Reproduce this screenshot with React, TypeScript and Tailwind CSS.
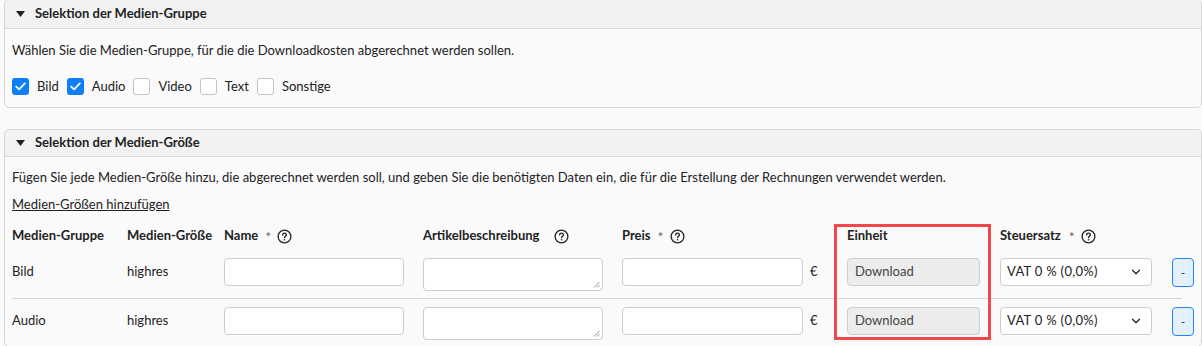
import React from "react";
import { ChevronDown } from "lucide-react";

const font = { fontFamily: "Lato, 'Noto Sans', sans-serif" };

function Help() {
  return (
    <svg width="15" height="15" viewBox="0 0 16 16" className="shrink-0 block">
      <circle cx="8" cy="8" r="6.8" fill="none" stroke="#222" strokeWidth="1.4" />
      <path d="M6 6.3a2 2 0 0 1 4 0c0 1.3-2 1.5-2 2.9" fill="none" stroke="#222" strokeWidth="1.4" strokeLinecap="round" />
      <circle cx="8" cy="11.4" r="0.85" fill="#222" />
    </svg>
  );
}

function Caret() {
  return (
    <svg width="9" height="6" viewBox="0 0 9 6" className="shrink-0">
      <path d="M0 0h9L4.5 6z" fill="#222" />
    </svg>
  );
}

function Check({ checked, label }: { checked: boolean; label: string }) {
  return (
    <div className="flex items-center gap-[8px]">
      {checked ? (
        <span className="flex h-[17px] w-[17px] items-center justify-center rounded-[3px] bg-[#0d7ff9]">
          <svg width="11" height="9" viewBox="0 0 11 9">
            <path d="M1.2 4.6l2.9 2.8L9.8 1.4" fill="none" stroke="#fff" strokeWidth="1.8" strokeLinecap="round" strokeLinejoin="round" />
          </svg>
        </span>
      ) : (
        <span className="h-[17px] w-[17px] rounded-[3px] border border-[#c4c4c4] bg-white" />
      )}
      <span>{label}</span>
    </div>
  );
}

function Row({ group, last }: { group: string; last?: boolean }) {
  return (
    <div className={`flex items-start pt-[8px] ${last ? "pb-[6px]" : "pb-[7px] border-b border-[#d4d4d4]"}`}>
      <div className="w-[115px] shrink-0 h-[28px] flex items-center">{group}</div>
      <div className="w-[97px] shrink-0 h-[28px] flex items-center">highres</div>
      <div className="w-[199px] shrink-0">
        <div className="w-[180px] h-[28px] rounded-[4px] border border-[#cdcdcd] bg-white" />
      </div>
      <div className="w-[199px] shrink-0">
        <div className="relative w-[180px] h-[33px] rounded-[4px] border border-[#cdcdcd] bg-white">
          <svg className="absolute right-[2px] bottom-[2px]" width="7" height="7" viewBox="0 0 7 7">
            <path d="M1 6.5L6.5 1M4 6.5L6.5 4" stroke="#777" strokeWidth="0.8" />
          </svg>
        </div>
      </div>
      <div className="w-[225px] shrink-0 flex items-center">
        <div className="w-[181px] h-[28px] rounded-[4px] border border-[#cdcdcd] bg-white" />
        <span className="ml-[7px]">€</span>
      </div>
      <div className="w-[153px] shrink-0">
        <div className="w-[133px] h-[28px] rounded-[4px] border border-[#cdcdcd] bg-[#ececec] flex items-center px-[7px] text-[#444]">
          Download
        </div>
      </div>
      <div className="w-[172px] shrink-0">
        <div className="w-[152px] h-[28px] rounded-[4px] border border-[#cdcdcd] bg-white flex items-center justify-between pl-[6px] pr-[8px]">
          <span className="tracking-[0.3px]">VAT 0 % (0,0%)</span>
          <ChevronDown size={14} strokeWidth={2.2} color="#222" />
        </div>
      </div>
      <div className="w-[22px] shrink-0 h-[29px] rounded-[4px] border border-[#1a85ff] bg-[#e5f0ff] flex items-center justify-center text-[#333] text-[12px]">
        -
      </div>
    </div>
  );
}

export default function App() {
  return (
    <div className="min-h-[346px] bg-[#fafafa] text-[13px] text-[#222] overflow-hidden" style={font}>
      <div className="ml-[4px] rounded-[5px] border border-[#d6d6d6] -mt-px">
        <div className="h-[29px] flex items-center gap-[10px] pl-[11px] bg-[#f2f2f2] border-b border-[#d6d6d6] rounded-t-[5px] font-bold">
          <Caret />
          <span>Selektion der Medien-Gruppe</span>
        </div>
        <div className="px-[7px] pt-[14px] pb-[12px]">
          <div className="h-[15px] leading-[15px]">Wählen Sie die Medien-Gruppe, für die die Downloadkosten abgerechnet werden sollen.</div>
          <div className="mt-[20px] flex items-center gap-[8px] h-[17px] leading-[17px]">
            <Check checked label="Bild" />
            <Check checked label="Audio" />
            <Check checked={false} label="Video" />
            <Check checked={false} label="Text" />
            <Check checked={false} label="Sonstige" />
          </div>
        </div>
      </div>

      <div className="ml-[4px] mt-[21px] rounded-[5px] border border-[#d6d6d6]">
        <div className="h-[27px] flex items-center gap-[10px] pl-[11px] bg-[#f2f2f2] border-b border-[#d6d6d6] rounded-t-[5px] font-bold">
          <Caret />
          <span>Selektion der Medien-Größe</span>
        </div>
        <div className="px-[7px] pt-[13px]">
          <div className="h-[15px] leading-[15px]">
            Fügen Sie jede Medien-Größe hinzu, die abgerechnet werden soll, und geben Sie die benötigten Daten ein, die für die Erstellung der Rechnungen verwendet werden.
          </div>
          <div className="mt-[12px] h-[15px] leading-[15px] underline">Medien-Größen hinzufügen</div>
          <div className="relative mt-[10px] mr-[12px]">
            <div className="flex items-center h-[28px] font-bold">
              <div className="w-[115px] shrink-0">Medien-Gruppe</div>
              <div className="w-[97px] shrink-0">Medien-Größe</div>
              <div className="w-[199px] shrink-0 flex items-center">
                <span>Name</span>
                <span className="ml-[7px] font-normal text-[#666] text-[14px]">*</span>
                <span className="ml-[6px]"><Help /></span>
              </div>
              <div className="w-[199px] shrink-0 flex items-center">
                <span>Artikelbeschreibung</span>
                <span className="ml-[15px]"><Help /></span>
              </div>
              <div className="w-[225px] shrink-0 flex items-center">
                <span>Preis</span>
                <span className="ml-[7px] font-normal text-[#666] text-[14px]">*</span>
                <span className="ml-[6px]"><Help /></span>
              </div>
              <div className="w-[153px] shrink-0">Einheit</div>
              <div className="flex items-center shrink-0">
                <span>Steuersatz</span>
                <span className="ml-[8px] font-normal text-[#666] text-[14px]">*</span>
                <span className="ml-[6px]"><Help /></span>
              </div>
            </div>
            <Row group="Bild" />
            <Row group="Audio" last />
            <div className="absolute left-[822px] top-[2px] w-[157px] h-[116px] border-[3px] border-[#f04848] pointer-events-none" />
          </div>
        </div>
      </div>
    </div>
  );
}
